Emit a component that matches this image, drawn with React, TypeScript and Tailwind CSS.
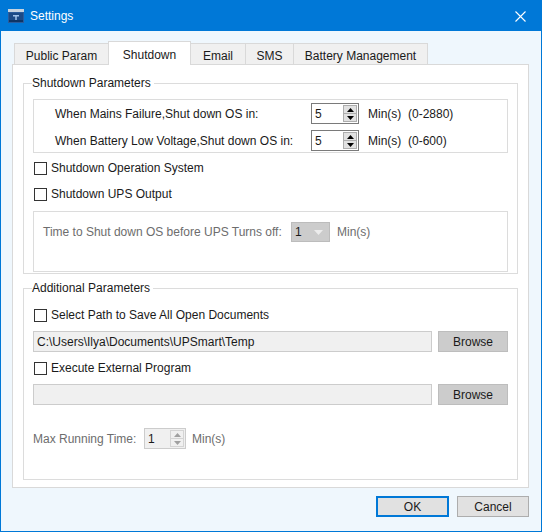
import { ChangeEvent, ReactNode, useState } from 'react';

const font = { fontFamily: '"Liberation Sans", Arial, sans-serif' };

function TitleIcon() {
  return (
    <svg width="16" height="14" viewBox="0 0 16 14">
      <rect x="0" y="0" width="16" height="14" fill="#2a5c9c" />
      <rect x="0" y="0" width="16" height="3" fill="#c7d3df" />
      <rect x="1" y="4" width="14" height="9" fill="#1b4a86" />
      <rect x="5" y="6" width="6" height="1.5" fill="#9fc2ea" />
      <rect x="7.25" y="6" width="1.5" height="5" fill="#9fc2ea" />
      <rect x="1" y="11" width="14" height="2" fill="#0f3566" />
    </svg>
  );
}

function Checkbox({ label }: { label: string }) {
  const [on, setOn] = useState(false);
  return (
    <label className="flex h-[20px] items-center whitespace-nowrap pl-[1px] text-[12px] text-[#1a1a1a]">
      <span
        onClick={() => setOn(!on)}
        className="flex h-[13px] w-[13px] items-center justify-center border border-[#333333] bg-white"
      >
        {on && (
          <svg width="9" height="9" viewBox="0 0 9 9">
            <path d="M1 4.5 L3.5 7 L8 1.5" stroke="#333" strokeWidth="1.5" fill="none" />
          </svg>
        )}
      </span>
      <span className="ml-[4px]">{label}</span>
    </label>
  );
}

function SpinArrows({ disabled }: { disabled?: boolean }) {
  const c = disabled ? '#a0a0a0' : '#000000';
  return (
    <div
      className={`flex h-[17px] w-[14px] flex-col border ${
        disabled ? 'border-[#d4d4d4] bg-[#f0f0f0]' : 'border-[#adadad] bg-[#e1e1e1]'
      }`}
    >
      <div className="flex flex-1 items-center justify-center">
        <svg width="7" height="4" viewBox="0 0 7 4">
          <path d="M0 4 L3.5 0 L7 4 Z" fill={c} />
        </svg>
      </div>
      <div className={`h-px ${disabled ? 'bg-[#d4d4d4]' : 'bg-[#adadad]'}`} />
      <div className="flex flex-1 items-center justify-center">
        <svg width="7" height="4" viewBox="0 0 7 4">
          <path d="M0 0 L3.5 4 L7 0 Z" fill={c} />
        </svg>
      </div>
    </div>
  );
}

function Spin({ value, width, disabled }: { value: string; width: string; disabled?: boolean }) {
  const [v, setV] = useState(value);
  return (
    <div
      className={`flex h-[21px] ${width} shrink-0 items-center border pr-[1px] ${
        disabled ? 'border-[#cccccc] bg-[#f0f0f0]' : 'border-[#7a7a7a] bg-white'
      }`}
    >
      <input
        value={v}
        disabled={disabled}
        onChange={(e: ChangeEvent<HTMLInputElement>) => setV(e.target.value)}
        className="h-full w-0 flex-1 bg-transparent pl-[3px] text-[12px] text-[#1a1a1a] outline-none"
        style={font}
      />
      <SpinArrows disabled={disabled} />
    </div>
  );
}

function Group({ title, children, className }: { title: string; children: ReactNode; className?: string }) {
  return (
    <fieldset className={`border border-[#dcdcdc] px-[9px] ${className ?? ''}`}>
      <legend className="-ml-px pr-[3px] text-[12px] leading-[16px] text-[#1a1a1a]">{title}</legend>
      {children}
    </fieldset>
  );
}

function PathRow({ value }: { value: string }) {
  return (
    <div className="flex h-[21px] gap-[6px]">
      <div className="flex flex-1 items-center whitespace-nowrap border border-[#cccccc] bg-[#f0f0f0] pl-[3px] text-[12px] text-[#1a1a1a]">
        {value}
      </div>
      <button className="h-[21px] w-[70px] border border-[#bdbdbd] bg-[#cccccc] text-[12px] text-[#1a1a1a]">
        Browse
      </button>
    </div>
  );
}

const tabs = [
  { name: 'Public Param', w: 'w-[95px]' },
  { name: 'Shutdown', w: 'w-[83px]' },
  { name: 'Email', w: 'w-[56px]' },
  { name: 'SMS', w: 'w-[49px]' },
  { name: 'Battery Management', w: 'w-[135px]' },
];

export default function App() {
  const [active, setActive] = useState('Shutdown');

  return (
    <div
      className="flex h-[532px] w-[542px] flex-col border border-[#0078d7] bg-[#eff7fd] text-[#1a1a1a]"
      style={font}
    >
      {/* title bar */}
      <div className="flex h-[30px] shrink-0 items-center bg-[#0078d7] pl-[7px] pr-[15px]">
        <TitleIcon />
        <span className="ml-[6px] text-[12px] text-white">Settings</span>
        <div className="flex-1" />
        <svg width="11" height="11" viewBox="0 0 11 11">
          <path d="M0.5 0.5 L10.5 10.5 M10.5 0.5 L0.5 10.5" stroke="#ffffff" strokeWidth="1.1" />
        </svg>
      </div>

      <div className="flex flex-1 flex-col pl-[11px] pr-[12px]">
        {/* tabs */}
        <div className="mt-[10px] flex h-[23px] items-start pl-[2px]">
          {tabs.map((t, i) => {
            const sel = t.name === active;
            return (
              <button
                key={t.name}
                onClick={() => setActive(t.name)}
                className={`${t.w} ${i > 0 ? '-ml-px' : ''} flex items-start justify-center whitespace-nowrap border border-b-0 border-[#d9d9d9] text-[12px] ${
                  sel
                    ? 'relative z-10 h-[24px] bg-white pt-[4px]'
                    : 'mt-[2px] h-[21px] bg-[#f0f0f0] pt-[3px]'
                }`}
              >
                {t.name}
              </button>
            );
          })}
        </div>

        {/* panel */}
        <div className="flex flex-col border border-[#d9d9d9] bg-white px-[10px] pb-[7px] pt-[10px]">
          <Group title="Shutdown Parameters" className="pb-[1px]">
            <div className="mt-[8px] flex flex-col gap-[6px] border border-[#dcdcdc] pb-[1px] pl-[21px] pt-[3px] text-[12px]">
              <div className="flex h-[21px] items-center whitespace-nowrap">
                <span className="w-[256px]">When Mains Failure,Shut down OS in:</span>
                <Spin value="5" width="w-[48px]" />
                <span className="ml-[9px] whitespace-pre">Min(s)  (0-2880)</span>
              </div>
              <div className="flex h-[21px] items-center whitespace-nowrap">
                <span className="w-[256px]">When Battery Low Voltage,Shut down OS in:</span>
                <Spin value="5" width="w-[48px]" />
                <span className="ml-[9px] whitespace-pre">Min(s)  (0-600)</span>
              </div>
            </div>
            <div className="mt-[5px]">
              <Checkbox label="Shutdown Operation System" />
            </div>
            <div className="mt-[6px]">
              <Checkbox label="Shutdown UPS Output" />
            </div>
            <div className="mt-[7px] h-[61px] border border-[#dcdcdc] pl-[9px] pt-[10px]">
              <div className="flex h-[20px] items-center whitespace-nowrap text-[12px] text-[#6d6d6d]">
                <span className="w-[248px]">Time to Shut down OS before UPS Turns off:</span>
                <div className="flex h-[20px] w-[39px] items-center justify-between border border-[#bcbcbc] bg-[#cccccc] pl-[3px] pr-[6px] text-[#1a1a1a]">
                  <span>1</span>
                  <svg width="9" height="5" viewBox="0 0 9 5">
                    <path d="M0 0 L9 0 L4.5 5 Z" fill="#ececec" />
                  </svg>
                </div>
                <span className="ml-[7px]">Min(s)</span>
              </div>
            </div>
          </Group>

          <Group title="Additional Parameters" className="mt-[6px] pb-[30px]">
            <div className="mt-[9px]">
              <Checkbox label="Select Path to Save All Open Documents" />
            </div>
            <div className="mt-[6px]">
              <PathRow value="C:\Users\Ilya\Documents\UPSmart\Temp" />
            </div>
            <div className="mt-[6px]">
              <Checkbox label="Execute External Program" />
            </div>
            <div className="mt-[6px]">
              <PathRow value="" />
            </div>
            <div className="mt-[23px] flex h-[21px] items-center whitespace-nowrap text-[12px] text-[#6d6d6d]">
              <span className="w-[111px]">Max Running Time:</span>
              <Spin value="1" width="w-[42px]" disabled />
              <span className="ml-[6px]">Min(s)</span>
            </div>
          </Group>
        </div>

        {/* buttons */}
        <div className="mt-[8px] flex justify-end gap-[8px]">
          <button className="h-[21px] w-[73px] border-2 border-[#0078d7] bg-[#e1e1e1] text-[12px] text-[#1a1a1a]">
            OK
          </button>
          <button className="h-[21px] w-[72px] border border-[#adadad] bg-[#e1e1e1] text-[12px] text-[#1a1a1a]">
            Cancel
          </button>
        </div>
      </div>
    </div>
  );
}
